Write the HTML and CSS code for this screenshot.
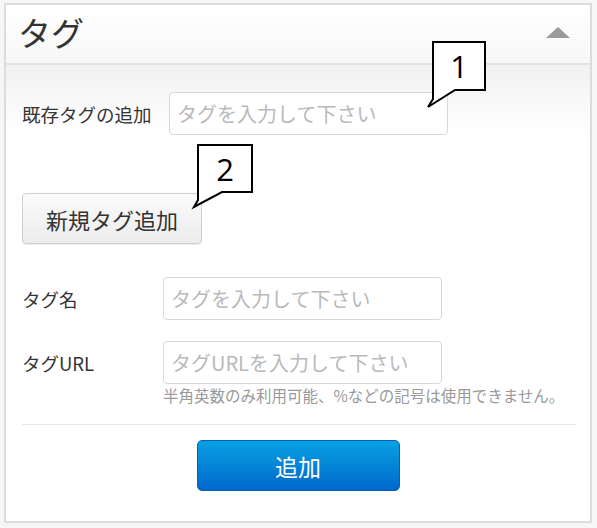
FILE: index.html
```html
<!DOCTYPE html>
<html lang="ja">
<head>
    <meta charset="UTF-8">
    <title>タグ</title>
    <link rel="stylesheet" href="styles.css">
</head>
<body>

    <div class="panel">
        <div class="panel-head">
            <h1>タグ</h1>
            <span class="toggle"></span>
        </div>

        <div class="panel-body">
            <div class="row row-existing">
                <label for="existing" class="label-wide">既存タグの追加</label>
                <input type="text" id="existing" class="field field-existing" placeholder="タグを入力して下さい">
            </div>

            <div class="row row-new">
                <button type="button" class="btn">新規タグ追加</button>
            </div>

            <div class="row row-name">
                <label for="tagname" class="label">タグ名</label>
                <input type="text" id="tagname" class="field" placeholder="タグを入力して下さい">
            </div>

            <div class="row row-url">
                <label for="tagurl" class="label">タグURL</label>
                <input type="text" id="tagurl" class="field" placeholder="タグURLを入力して下さい">
            </div>
            <p class="help">半角英数のみ利用可能、%などの記号は使用できません。</p>

            <hr class="sep">

            <div class="actions">
                <button type="button" class="btn-primary">追加</button>
            </div>
        </div>

        <!-- 吹き出し -->
        <div class="callout callout-1">
            <svg width="60" height="72" viewBox="-6 0 60 72"><path d="M1,1 H53 V49 H23 L-4,66 L1,58 Z"/></svg>
            <span>1</span>
        </div>
        <div class="callout callout-2">
            <svg width="60" height="72" viewBox="-6 0 60 72"><path d="M1,1 H55 V48 H25 L-3,63 L1,56 Z"/></svg>
            <span>2</span>
        </div>
    </div>

</body>
</html>
```

FILE: styles.css
```css
body {
    margin: 0;
    background-color: #f6f6f6;
    font-family: "Noto Sans CJK JP", "Noto Sans", sans-serif;
    color: #333;
}
.panel {
    position: relative;
    box-sizing: border-box;
    width: 588px;
    height: 520px;
    margin: 3px 0 0 4px;
    border: 2px solid #dcdcdc;
    background-color: #fff;
}
.panel-head {
    display: flex;
    align-items: center;
    justify-content: space-between;
    height: 58px;
    padding: 0 20px 0 12px;
    background: linear-gradient(#fff, #f7f7f7);
    border-bottom: 2px solid #e2e2e2;
}
.panel-head h1 {
    margin: 0;
    font-size: 33px;
    font-weight: normal;
    color: #333;
    line-height: 1;
    margin-top: -4px;
}
.toggle {
    width: 0;
    height: 0;
    border-left: 12px solid transparent;
    border-right: 12px solid transparent;
    border-bottom: 11px solid #9a9a9a;
    margin-top: -4px;
}
.panel-body {
    padding: 27px 14px 0 16px;
    background: linear-gradient(#f1f1f1, #fff 70px);
}
.row {
    display: flex;
    align-items: center;
}
.label-wide {
    width: 147px;
    font-size: 18.5px;
    white-space: nowrap;
}
.label {
    width: 141px;
    font-size: 18.5px;
}
.field {
    box-sizing: border-box;
    width: 279px;
    height: 43px;
    padding: 0 7px;
    border: 1px solid #d8d8d8;
    border-radius: 4px;
    background-color: #fff;
    font-family: inherit;
    font-size: 20px;
    color: #333;
}
.field::placeholder {
    color: #b9b9b9;
}
.row-new {
    margin-top: 58px;
}
.btn {
    width: 180px;
    height: 51px;
    border: 1px solid #cfcfcf;
    border-radius: 4px;
    background: linear-gradient(#fbfbfb, #ececec);
    box-shadow: 0 1px 1px rgba(0,0,0,0.08);
    font-family: inherit;
    font-size: 22px;
    color: #333;
    cursor: pointer;
}
.row-name {
    margin-top: 33px;
}
.row-url {
    margin-top: 21px;
}
.help {
    margin: 2px 0 0 141px;
    font-size: 15.5px;
    line-height: 18px;
    color: #999;
    white-space: nowrap;
}
.sep {
    margin: 20px 0 0 0;
    border: none;
    border-top: 1px solid #e8e8e8;
}
.actions {
    display: flex;
    justify-content: center;
    padding-top: 15px;
    padding-right: 2px;
}
.btn-primary {
    width: 203px;
    height: 51px;
    border: 1px solid #0460b8;
    border-radius: 5px;
    background: linear-gradient(#09a0e2, #0068cc);
    font-family: inherit;
    font-size: 23px;
    color: #fff;
    cursor: pointer;
}
.callout {
    position: absolute;
    width: 54px;
    height: 50px;
}
.callout svg {
    position: absolute;
    left: -6px;
    top: 0;
    overflow: visible;
}
.callout path {
    fill: #fff;
    stroke: #000;
    stroke-width: 2;
}
.callout span {
    position: relative;
    display: block;
    text-align: center;
    font-family: "Open Sans", "DejaVu Sans", sans-serif;
    font-size: 31px;
    line-height: 50px;
    color: #000;
}
.callout-1 {
    left: 426px;
    top: 36px;
}
.callout-2 {
    left: 191px;
    top: 139px;
    width: 56px;
}
```
